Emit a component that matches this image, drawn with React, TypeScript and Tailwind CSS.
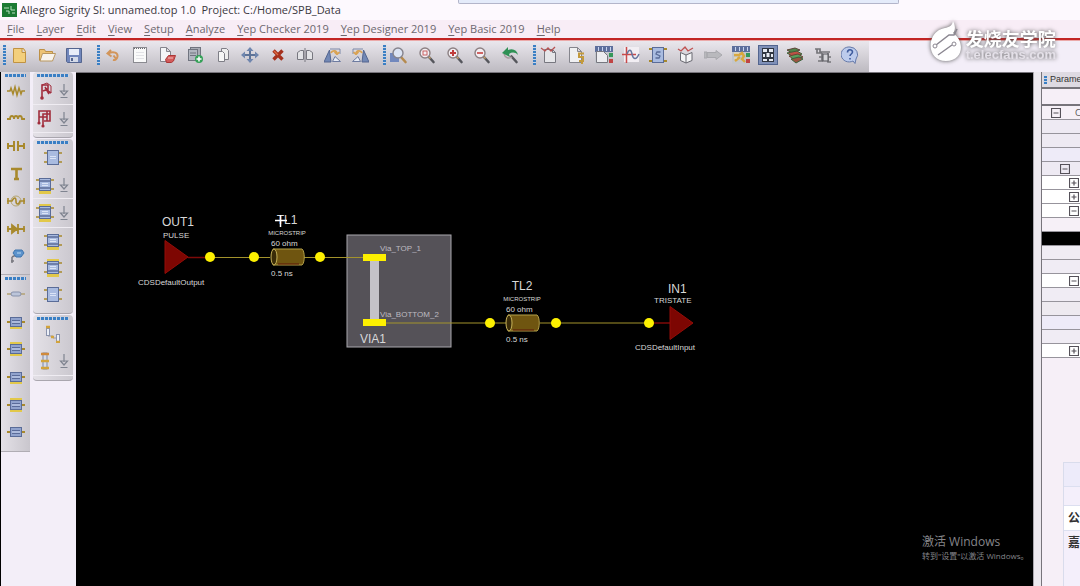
import type { ReactNode } from "react";

const GOLD = "#a8892c";
const CHIP = "#a9bbe0";
const CHIP_EDGE = "#5a6c98";

function Icon({ children }: { children: ReactNode }) {
  return (
    <svg viewBox="0 0 18 18" className="size-[18px]" fill="none" aria-hidden="true">
      {children}
    </svg>
  );
}

function Page() {
  return <path d="M2.5 1.500h8l4 4v11h-12z M10.5 1.500v4h4" fill="#f0f0f2" stroke="#85858d" />;
}

function Lens({ children }: { children?: ReactNode }) {
  return (
    <>
      <path d="M10.5 10.5l5 5.5" stroke="#55565c" strokeWidth="2.6" strokeLinecap="round" />
      <path d="M10.5 10.5l2 2" stroke="#c9a067" strokeWidth="1.6" />
      <circle cx="7" cy="7" r="5" fill="#f3eef2" stroke="#8c8083" strokeWidth="1.4" />
      {children}
    </>
  );
}

function Board() {
  return (
    <>
      <rect x="0" y="0" width="18" height="18" fill="#c3c6cc" />
      <rect x="0" y="0" width="18" height="6" fill="#5d6f9c" />
      <path d="M3.500 1v4M7.500 1v4M11.500 1v4M15.500 1v4" stroke="#c7d4f0" />
      <rect x="14" y="7" width="4" height="4" fill="#35985a" />
      <rect x="14" y="13" width="4" height="4" fill="#c04444" />
    </>
  );
}

type Tool = { label: string; icon: ReactNode; on?: boolean };

const FILE_TOOLS: Tool[] = [
  {
    label: "New",
    icon: <path d="M3.5 2.5h10l2 3v11h-12z M12 2.5v4h3.5" fill="#f3cf7c" stroke="#c09343" />,
  },
  {
    label: "Open",
    icon: (
      <>
        <path d="M1.5 14.5v-11h5l1 2h7v3" fill="#edc374" stroke="#bd9046" />
        <path d="M4.5 7.5h13l-3 7.5h-12.500z" fill="#f7f3ec" stroke="#b9975f" />
      </>
    ),
  },
  {
    label: "Save",
    icon: (
      <>
        <path d="M1.500 2.500h15v14h-14l-1-1z" fill="#7186bb" stroke="#54658f" />
        <rect x="4" y="3" width="10" height="6" fill="#e8edf8" />
        <rect x="5" y="11" width="8" height="5" fill="#d4dae8" />
        <rect x="6" y="12" width="2" height="3" fill="#54658f" />
      </>
    ),
  },
];

const EDIT_TOOLS: Tool[] = [
  {
    label: "Undo",
    icon: (
      <path
        d="M7 4L3.500 7.500l4 3M4 7.500c6-3 10-.5 9.500 3-.5 2.500-2.500 4-4.500 3.500M9.500 9.500l3 4"
        stroke="#d2955a"
        strokeWidth="2"
      />
    ),
  },
  {
    label: "Notes",
    icon: (
      <>
        <rect x="2.500" y="1.500" width="13" height="15" fill="#fafafa" stroke="#8a8a90" />
        <path d="M3 2.500h12" stroke="#6a6a70" strokeDasharray="1 1" />
        <path d="M5 6.500h8M5 9.500h8M5 12.500h8" stroke="#e2e2e6" />
      </>
    ),
  },
  {
    label: "Delete page",
    icon: (
      <>
        <path d="M1.500 1.500h6l4 4v10h-10z M7.500 1.500v4h4" fill="#f4f4f6" stroke="#85858d" />
        <path d="M6.500 13.500l3-4h7l-2 5.500-2 1.500h-5z" fill="#d35a5a" stroke="#ab3636" />
        <path d="M9 12h5" stroke="#f1bcbc" />
      </>
    ),
  },
  {
    label: "Add copy",
    icon: (
      <>
        <rect x="4.500" y="1.500" width="10" height="11" fill="#a8abb4" stroke="#70747f" />
        <rect x="2.500" y="3.500" width="9" height="11" fill="#b2b6c0" stroke="#70747f" />
        <path d="M4 7h6M4 9.500h6" stroke="#70747f" />
        <circle cx="13" cy="13" r="4" fill="#35a158" />
        <path d="M13 10.500v5M10.500 13h5" stroke="#fff" strokeWidth="1.500" />
      </>
    ),
  },
  {
    label: "Copy",
    icon: (
      <>
        <path d="M7.500 2.500h5l2 2v9h-7z" fill="#eee" stroke="#7e7e86" />
        <path d="M4.500 5.500h4l2 2v8h-6z" fill="#f6f6f6" stroke="#7e7e86" />
      </>
    ),
  },
  {
    label: "Move",
    icon: (
      <>
        <path d="M9 3v12M3 9h12" stroke="#5d7398" strokeWidth="2" />
        <path d="M9 1l3.500 4h-7zM9 17l3.500-4h-7zM0 9l4-3.500v7zM18 9l-4-3.500v7z" fill="#6f86ae" />
      </>
    ),
  },
  {
    label: "Delete",
    icon: (
      <>
        <path d="M4.500 4.500l9 9M13.500 4.500l-9 9" stroke="#a5301c" strokeWidth="3.400" />
        <path d="M5 5l4 4" stroke="#e06c42" strokeWidth="1.200" />
      </>
    ),
  },
  {
    label: "Mirror",
    icon: (
      <>
        <path d="M7.500 4.500h-3l-3 2v7h6zM10.500 4.500h3l3 2v7h-6z" fill="#e3e3e6" stroke="#77777f" />
        <path d="M9 2v14" stroke="#77777f" />
      </>
    ),
  },
  {
    label: "Rotate left",
    icon: (
      <>
        <path d="M0 16L5.500 4 7 16z" fill="#7288b5" stroke="#54658f" />
        <path d="M8.500 15.500h8l-5.500-5z" fill="#e7ebf4" stroke="#6d7ba0" />
        <path d="M6 3h10v5" stroke="#7c89a9" />
        <path d="M7 7c1-3 6-3 6 1M13 8.500L10.500 6M13 8.500L15.500 6" stroke="#d9a354" strokeWidth="1.700" />
      </>
    ),
  },
  {
    label: "Rotate right",
    icon: (
      <>
        <path d="M18 16L12.500 4 11 16z" fill="#7288b5" stroke="#54658f" />
        <path d="M9.500 15.500h-8l5.500-5z" fill="#e7ebf4" stroke="#6d7ba0" />
        <path d="M12 3H2v5" stroke="#7c89a9" />
        <path d="M11 7c-1-3-6-3-6 1M5 8.500L7.500 6M5 8.500L2.500 6" stroke="#d9a354" strokeWidth="1.700" />
      </>
    ),
  },
];

const ZOOM_TOOLS: Tool[] = [
  {
    label: "Zoom by points",
    icon: (
      <>
        <rect x="0" y="7" width="9" height="9" fill="#7288bd" />
        <path d="M10.500 10.500l5 5.500" stroke="#b58a4e" strokeWidth="2.600" strokeLinecap="round" />
        <circle cx="8" cy="7" r="5" fill="#dbe3f3" stroke="#85838c" strokeWidth="1.400" />
      </>
    ),
  },
  {
    label: "Zoom fit",
    icon: (
      <Lens>
        <rect x="5" y="5" width="4" height="4" stroke="#c96060" />
      </Lens>
    ),
  },
  {
    label: "Zoom in",
    icon: (
      <Lens>
        <path d="M7 4v6M4 7h6" stroke="#bf3c3c" strokeWidth="2" />
      </Lens>
    ),
  },
  {
    label: "Zoom out",
    icon: (
      <Lens>
        <path d="M4 7h6" stroke="#cf6464" strokeWidth="2" />
      </Lens>
    ),
  },
  {
    label: "Zoom previous",
    icon: (
      <>
        <path d="M10.500 10.500l5 5.500" stroke="#55565c" strokeWidth="2.600" strokeLinecap="round" />
        <path d="M3 8c1 4 5 5 8 3" stroke="#a79a9d" strokeWidth="1.400" />
        <path d="M1 7l6-6v3c5-2 9 0 10 5-3-3-6-3-9-1l1 3z" fill="#2f9155" />
      </>
    ),
  },
];

const ANALYSIS_TOOLS: Tool[] = [
  {
    label: "Waveform report",
    icon: (
      <>
        <path d="M4.500 3.500h8l3 3v10h-11z M12.500 3.500v3h3" fill="#e6e6e9" stroke="#77777f" />
        <path d="M1 2l4 3 3-3 3 3 4-4" stroke="#b75252" strokeWidth="1.300" />
      </>
    ),
  },
  {
    label: "Sweep report",
    icon: (
      <>
        <Page />
        <path d="M17 7.500h-5v3.500h4v4h-4M15 15v3" stroke="#c39a3c" strokeWidth="2" />
      </>
    ),
  },
  {
    label: "Board setup",
    icon: (
      <>
        <Board />
        <path d="M1.500 5.500h7l4 4v7h-11z" fill="#ececef" stroke="#77777f" />
      </>
    ),
  },
  {
    label: "Simulate",
    icon: (
      <>
        <rect x="2" y="1" width="15" height="15" fill="#f2eef3" />
        <path d="M4.500 1v16M0 8.500h14" stroke="#c94a4a" strokeWidth="1.500" />
        <path d="M5 8c2-5 4-5 5 0s4 7 7 0" stroke="#68779e" strokeWidth="1.500" />
      </>
    ),
  },
  {
    label: "Device model",
    icon: (
      <>
        <path d="M0 3h18M0 15h18" stroke={GOLD} strokeWidth="2" />
        <rect x="3.500" y="1.500" width="11" height="15" fill={CHIP} stroke={CHIP_EDGE} />
        <path d="M11.500 6H8L7 8l4 2-1 2H6.500" stroke={CHIP_EDGE} strokeWidth="1.300" />
      </>
    ),
  },
  {
    label: "Wave library",
    icon: (
      <>
        <path d="M9 9L3.500 6.500v8L9 17l6-2.500v-8zM9 9v8" fill="#f4f4f6" stroke="#686870" />
        <path d="M1 3l3 2 4-4 3 4 5-3" stroke="#c05252" strokeWidth="1.300" />
      </>
    ),
  },
  {
    label: "Connector",
    icon: <path d="M0 6h3v6H0zM3 6.500h9V4.500l6 4.500-6 4.500v-2H3z" fill="#b9b9bd" stroke="#a8a8ad" />,
  },
  {
    label: "Board edit",
    icon: (
      <>
        <Board />
        <path d="M2 9h5l3-2 2 3-2 3 3 3M3 15l5-4" stroke="#d9a83e" strokeWidth="2.400" />
        <path d="M2 7h5M2 12h3" stroke="#f5e2b0" />
      </>
    ),
  },
  {
    label: "Constraint manager",
    on: true,
    icon: (
      <>
        <rect x="3" y="2" width="12" height="14" fill="#303642" />
        <path d="M4 3h4v3H4zM10 3h4v3h-4zM4 8h2v3H4zM7.500 7h3v4h-3zM12 8h2v3h-2zM4 13h4v2H4zM10 13h4v2h-4z" fill="#e6eaf3" />
      </>
    ),
  },
  {
    label: "Stackup",
    icon: (
      <>
        <path d="M1 4l8-2 5 2-8 3z" fill="#52864d" stroke="#5e4336" />
        <path d="M1 7l10-2 5 3-8 3z" fill="#bf5145" stroke="#39623a" />
        <path d="M3 10l9-2 5 3-8 3z" fill="#58a05d" stroke="#6c4034" />
        <path d="M5 13l8-2 4 2-7 4z" fill="#9c5240" stroke="#39623a" />
      </>
    ),
  },
  {
    label: "Via wizard",
    icon: (
      <>
        <path d="M1 3h5v3h10M3 3v4h5M8 7v8M5 11h12M14 7v9h3M4 15h5" stroke="#75757a" strokeWidth="1.700" />
        <rect x="9" y="8" width="5" height="7" fill="#d4d4d8" stroke="#55555b" />
      </>
    ),
  },
  {
    label: "Help",
    icon: (
      <>
        <path d="M9 1a8 7.500 0 1 0 3 14l2 2.500 1-4.500A8 7.500 0 0 0 9 1z" fill="#bccbec" stroke="#6478a8" />
        <path d="M6.500 6.500c0-3.500 5-3.500 5-.5 0 2-2.500 2-2.500 4M9 12v1.500" stroke="#3e5b9d" strokeWidth="1.600" />
      </>
    ),
  },
];

function ToolButton({ label, icon, on }: Tool) {
  return (
    <button
      type="button"
      aria-label={label}
      className={on ? "size-[18px] bg-[#7f90b8] outline-1 outline-[#53658f]" : "size-[18px]"}
    >
      <Icon>{icon}</Icon>
    </button>
  );
}

function ToolGroup({ tools, width }: { tools: Tool[]; width: string }) {
  return (
    <div className="flex items-center gap-1">
      <span className="h-5 w-[3px] bg-[repeating-linear-gradient(#3a7fc4_0_2px,#c9d3e4_2px_3px)]" />
      <div className={`flex justify-between ${width}`}>
        {tools.map((tool) => (
          <ToolButton key={tool.label} {...tool} />
        ))}
      </div>
    </div>
  );
}

function Chip({ top, bottom }: { top?: boolean; bottom?: boolean }) {
  const banded = top || bottom;
  return (
    <>
      {top && <rect x="3" y="0" width="12" height="4" fill="#e2c84a" />}
      {bottom && <rect x="3" y="14" width="12" height="4" fill="#e2c84a" />}
      <path d="M0 4h18M0 13h18" stroke={GOLD} strokeWidth="1.600" />
      <rect
        x="3.500"
        y={banded ? 2.5 : 1.5}
        width="11"
        height={banded ? 12 : 14}
        fill={CHIP}
        stroke={CHIP_EDGE}
      />
      {banded && <path d="M4 5h10M4 12h10" stroke="#6f80ab" strokeWidth="2" />}
      <path d="M6 7.500h6M6 9.500h6" stroke="#dbe4f6" />
    </>
  );
}

function Coupled({ top, bottom }: { top?: boolean; bottom?: boolean }) {
  return (
    <>
      {top && <rect x="3" y="2" width="12" height="4" fill="#e2c84a" />}
      {bottom && <rect x="3" y="13" width="12" height="3" fill="#e2c84a" />}
      <path d="M0 9h18" stroke={GOLD} strokeWidth="2" />
      <rect x="3.500" y="4.500" width="11" height="9" fill="#91a3cd" stroke={CHIP_EDGE} />
      <path d="M5 7.500h8M5 10.500h8" stroke="#5b6c99" />
      <path d="M5 9h8" stroke="#c8d3ec" />
    </>
  );
}

const DISCRETE_PARTS: Tool[] = [
  { label: "Resistor", icon: <path d="M0 9h3l1-3 2 6 2-7 2 8 2-7 2 6 1-3h3" stroke={GOLD} strokeWidth="1.500" /> },
  {
    label: "Inductor",
    icon: <path d="M0 10h3c0-4 4-4 4 0 0-4 4-4 4 0 0-4 4-4 4 0h3" stroke={GOLD} strokeWidth="1.800" />,
  },
  {
    label: "Capacitor",
    icon: <path d="M0 9h7M11 9h7M1 6v6M7 4v10M11 4v10M17 6v6" stroke={GOLD} strokeWidth="2" />,
  },
  {
    label: "Terminator",
    icon: <path d="M4 4h11M9.500 4v11M7 14h5" stroke={GOLD} strokeWidth="2.600" />,
  },
  {
    label: "Source",
    icon: (
      <>
        <circle cx="9" cy="9" r="5" stroke="#b5a671" />
        <path d="M0 9h5c2-4 4-4 4 0s3 4 4 0h5M1 6v6M17 6v6" stroke={GOLD} strokeWidth="1.600" />
      </>
    ),
  },
  {
    label: "Diode",
    icon: <path d="M0 9h18M1 6v6M5 5v8l5-4zM11 4v10M17 6v6" fill={GOLD} stroke={GOLD} strokeWidth="1.800" />,
  },
  {
    label: "Probe",
    icon: (
      <>
        <path d="M5 16v-6M4 14h3M5 10l4-2" stroke="#77777f" strokeWidth="1.500" />
        <path d="M8 3h7l2 3-3 4H9L6 6z" fill="#5b92cc" stroke="#3f75ad" />
        <path d="M10 6h4" stroke="#bcdaf3" />
      </>
    ),
  },
];

const LINE_PARTS: Tool[] = [
  {
    label: "Ideal line",
    icon: (
      <>
        <path d="M0 9h18" stroke="#b3a273" strokeWidth="1.500" />
        <rect x="4" y="7" width="10" height="4" rx="2" fill="#bcc5da" stroke="#8791ab" />
      </>
    ),
  },
  { label: "Microstrip", icon: <Coupled bottom /> },
  { label: "Stripline", icon: <Coupled top bottom /> },
  { label: "Coupled microstrip", icon: <Coupled bottom /> },
  { label: "Coupled stripline", icon: <Coupled top bottom /> },
  { label: "Coupled line", icon: <Coupled /> },
];

type Part = Tool & { menu?: boolean };

const TRACE_PARTS: Part[] = [
  {
    label: "Trace",
    menu: true,
    icon: (
      <>
        <path d="M6 16V3h6v4L7 9M12 3v6l3 2M9 5l4 7" stroke="#a12d3c" strokeWidth="1.600" />
        <circle cx="6" cy="16" r="1.800" fill="#a12d3c" />
        <path d="M6 3l5-2 4 3v7" stroke="#a12d3c" />
      </>
    ),
  },
  {
    label: "Trace pair",
    menu: true,
    icon: (
      <>
        <path d="M3 14V1h11v10H8M7 16V4h7M3 7h8v4M11 1v6" stroke="#a12d3c" strokeWidth="1.600" />
        <circle cx="3" cy="13" r="1.600" fill="#a12d3c" />
        <circle cx="7" cy="16" r="1.600" fill="#a12d3c" />
      </>
    ),
  },
];

const CHIP_PARTS: Part[] = [
  { label: "Generic device", icon: <Chip /> },
  { label: "Device bottom", menu: true, icon: <Chip bottom /> },
  { label: "Device top", menu: true, icon: <Chip top bottom /> },
  { label: "Package bottom", icon: <Chip bottom /> },
  { label: "Package top", icon: <Chip top bottom /> },
  { label: "Package", icon: <Chip /> },
];

const VIA_PARTS: Part[] = [
  {
    label: "Wire bond",
    icon: (
      <>
        <path d="M4 3v8h5v2h5v3" stroke="#9a9aa4" />
        <rect x="2.500" y="3.500" width="3" height="7" fill="#eceff7" stroke="#8a93ad" />
        <rect x="12.500" y="9.500" width="3" height="7" fill="#eceff7" stroke="#8a93ad" />
        <path d="M2 2h4M7 12h3M12 17h4" stroke="#d2a33c" strokeWidth="2.500" />
      </>
    ),
  },
  {
    label: "Via",
    menu: true,
    icon: (
      <>
        <rect x="7" y="1" width="4" height="16" fill="#d5dbea" stroke="#7c88a6" />
        <path d="M5 2h8" stroke="#d08a3c" strokeWidth="2.500" />
        <path d="M5 9h8M5 16h8" stroke="#d2a33c" strokeWidth="2.500" />
      </>
    ),
  },
];

function DotHandle() {
  return (
    <div className="px-1">
      <div className="h-[3px] bg-[repeating-linear-gradient(90deg,#3a7fc4_0_3px,#c9d3e4_3px_4px)]" />
    </div>
  );
}

function PartColumn({ parts, height }: { parts: Tool[]; height: string }) {
  return (
    <div className="pt-[2px]">
      <DotHandle />
      <div className={`flex flex-col ${height}`}>
        {parts.map((part) => (
          <div key={part.label} className="flex flex-1 items-center justify-center">
            <ToolButton {...part} />
          </div>
        ))}
      </div>
    </div>
  );
}

function PartPanel({ parts, height }: { parts: Part[]; height: string }) {
  return (
    <section className="rounded-sm border-b border-[#a9a6ae] bg-linear-to-r from-[#e4e1e7] to-[#cbc8cf] pt-[2px] pb-1">
      <DotHandle />
      <div className={`flex flex-col ${height}`}>
        {parts.map((part) => (
          <div
            key={part.label}
            className={
              part.menu
                ? "flex flex-1 items-center gap-1 border-b border-[#efecf2] pl-[3px]"
                : "flex flex-1 items-center justify-center"
            }
          >
            <ToolButton label={part.label} icon={part.icon} />
            {part.menu && (
              <button type="button" aria-label={`${part.label} options`} className="h-4 w-3">
                <svg viewBox="0 0 12 16" className="h-4 w-3" fill="none" aria-hidden="true">
                  <path d="M6 1v8M2.500 8L6 12l3.500-4zM2.500 14.500h7" stroke="#7f8490" strokeWidth="1.200" />
                </svg>
              </button>
            )}
          </div>
        ))}
      </div>
    </section>
  );
}

const MENUS = [
  "File",
  "Layer",
  "Edit",
  "View",
  "Setup",
  "Analyze",
  "Yep Checker 2019",
  "Yep Designer 2019",
  "Yep Basic 2019",
  "Help",
];

function TransmissionLine({ x, y, name }: { x: number; y: number; name: string }) {
  return (
    <g transform={`translate(${x} ${y})`}>
      <path d="M-14-8h29c3 2 3 14 0 16h-29z" fill="#6f5510" stroke="#b3a048" />
      <ellipse cx="-13" cy="0" rx="3" ry="8" fill="#3a2c08" stroke="#c9b45a" />
      <path d="M-9 7h21" stroke="#5c1408" />
      <g fill="#d8d8d8">
        <text y="-33" fontSize="12" textAnchor="middle">{name}</text>
        <text y="-22" fontSize="6" textAnchor="middle">MICROSTRIP</text>
        <text x="-16" y="-11" fontSize="8">60 ohm</text>
        <text x="-16" y="19" fontSize="8">0.5 ns</text>
      </g>
    </g>
  );
}

function Node({ x, y }: { x: number; y: number }) {
  return <circle cx={x} cy={y} r="5" fill="#fdf000" />;
}

function Schematic() {
  return (
    <svg
      width="957"
      height="513"
      viewBox="76 73 957 513"
      className="block font-['Liberation_Sans',sans-serif]"
      role="img"
      aria-label="Topology: OUT1, TL1, VIA1, TL2, IN1"
    >
      <rect x="347" y="235" width="104" height="112" fill="#555258" stroke="#aaa8ae" />
      <path d="M210 257.500h60M304 257.500h60M386 323h120M540 323h109" stroke="#a3932c" strokeWidth="1.200" />
      <path d="M188 257.500h22M649 323h21" stroke="#7d0a08" strokeWidth="1.500" />
      <path d="M165 240.500l23 16.500-23 16.500zM670 306.500l23 16.500-23 16.500z" fill="#7d0602" stroke="#940d08" />

      <rect x="370" y="259" width="9" height="62" fill="#c4c2c8" />
      <rect x="363" y="254" width="23" height="7" fill="#fdf000" />
      <rect x="363" y="319" width="23" height="7" fill="#fdf000" />

      <TransmissionLine x={287} y={257} name="TL1" />
      <TransmissionLine x={522} y={323} name="TL2" />

      <Node x={210} y={257} />
      <Node x={254} y={257} />
      <Node x={320} y={257} />
      <Node x={490} y={323} />
      <Node x={556} y={323} />
      <Node x={649} y={323} />

      <g fill="#d8d8d8">
        <text x="162" y="226" fontSize="12">OUT1</text>
        <text x="163" y="238" fontSize="8">PULSE</text>
        <text x="138" y="285" fontSize="8">CDSDefaultOutput</text>
        <text x="668" y="293" fontSize="12">IN1</text>
        <text x="654" y="303" fontSize="8">TRISTATE</text>
        <text x="635" y="350" fontSize="8">CDSDefaultInput</text>
        <text x="360" y="343" fontSize="12">VIA1</text>
      </g>
      <g fill="#bdbbc1" fontSize="8">
        <text x="380" y="251">Via_TOP_1</text>
        <text x="380" y="317">Via_BOTTOM_2</text>
      </g>

      {/* crosshair cursor */}
      <path d="M280.500 215v12M275 220.500h12" stroke="#fff" strokeWidth="1.500" />
    </svg>
  );
}

type Row = { mark?: "plus" | "minus"; pad?: string; text?: string; tone: string };

const ROWS: Row[] = [
  { mark: "minus", pad: "pl-[9px]", text: "C", tone: "bg-[#f6f0f7]" },
  { tone: "bg-[#eeeaf3]" },
  { tone: "bg-[#eeeaf3]" },
  { tone: "bg-[#eeebf8]" },
  { mark: "minus", pad: "pl-[18px]", tone: "bg-[#eeeaf3]" },
  { mark: "plus", pad: "pl-[27px]", tone: "bg-white" },
  { mark: "plus", pad: "pl-[27px]", tone: "bg-white" },
  { mark: "minus", pad: "pl-[27px]", tone: "bg-white" },
  { tone: "bg-[#f6f0f7]" },
  { tone: "bg-black" },
  { tone: "bg-[#f0ecf4]" },
  { tone: "bg-[#f0ecf4]" },
  { mark: "minus", pad: "pl-[27px]", tone: "bg-white" },
  { tone: "bg-[#f0ecf4]" },
  { tone: "bg-[#eeeaf0]" },
  { tone: "bg-[#eeebf8]" },
  { tone: "bg-[#f0ecf4]" },
  { mark: "plus", pad: "pl-[27px]", tone: "bg-white" },
];

function Parameters() {
  return (
    <aside className="flex w-[39px] shrink-0 flex-col overflow-hidden border-l border-[#77747b] bg-[#f6eff7]">
      <h2 className="flex h-[15px] shrink-0 items-center gap-[3px] bg-[#dedae2] pl-[2px] font-['Liberation_Sans',sans-serif] text-[9px] text-[#333]">
        <span className="h-2 w-[3px] shrink-0 bg-[repeating-linear-gradient(#3a7fc4_0_2px,#c9d3e4_2px_3px)]" />
        Parameters
      </h2>
      <table className="w-full border-collapse text-[9px]">
        <thead>
          <tr className="h-[17px] border-t-2 border-b-2 border-[#77747b]">
            <th className="p-0" />
          </tr>
        </thead>
        <tbody>
          {ROWS.map((row, i) => (
            <tr key={i} className={`h-[14px] border-b border-[#97949c] ${row.tone}`}>
              <td className={`p-0 ${row.pad ?? ""}`}>
                <span className="flex h-[13px] items-center gap-[14px] text-[#555]">
                  {row.mark && (
                    <svg viewBox="0 0 10 10" className="size-[10px] shrink-0" fill="none">
                      <path
                        d={row.mark === "plus" ? "M.5.5h9v9h-9zM2.500 5h5M5 2.500v5" : "M.5.5h9v9h-9zM2.500 5h5"}
                        stroke="#555159"
                        strokeWidth="1.200"
                      />
                    </svg>
                  )}
                  {row.text}
                </span>
              </td>
            </tr>
          ))}
        </tbody>
      </table>
      <div className="mt-auto ml-[21px] border-t border-l border-[#d9dcec] bg-[#f4effb] text-[12px] font-bold text-[#333]">
        <div className="h-6 border-b border-[#dcdff0] bg-[#edebfa]" />
        <div className="h-[18px]" />
        <div className="h-[26px] overflow-hidden border-y border-[#dcdff0] bg-white pl-1 leading-6">公</div>
        <div className="h-[55px] overflow-hidden pl-1 leading-6 whitespace-nowrap">嘉立</div>
      </div>
    </aside>
  );
}

function Watermark() {
  return (
    <div className="absolute top-5 right-6 flex items-start gap-[2px] drop-shadow-[0_0_2px_#555]">
      <svg viewBox="0 0 36 42" className="h-[42px] w-9" aria-hidden="true">
        <path d="M25 1c3 6 2 10 0 12 12 8 11 28-7 28S-2 18 11 10C18 7 24 8 25 1z" fill="#fff" />
        <path d="M8 25l13-10h5l3-6M10 35l14-10" stroke="#8b8791" strokeWidth="1.500" fill="none" />
        <circle cx="7" cy="26" r="2" fill="#fff" stroke="#8b8791" />
        <circle cx="26" cy="24" r="2" fill="#fff" stroke="#8b8791" />
      </svg>
      <div className="pt-2 text-white">
        <p className="font-['Noto_Sans_CJK_SC',sans-serif] text-[18px] leading-5 font-bold">发烧友学院</p>
        <p className="font-['Liberation_Sans',sans-serif] text-[13px] leading-[14px] font-bold text-[#e4e0e8]">
          t.elecfans.com
        </p>
      </div>
    </div>
  );
}

export default function App() {
  return (
    <div className="relative flex h-screen flex-col overflow-hidden bg-[#f3eef8] font-['Open_Sans','Noto_Sans_CJK_SC',sans-serif]">
      <header className="bg-[#fdf9fe]">
        <div className="flex h-5 items-center gap-[3px] pl-[2px]">
          <svg viewBox="0 0 15 14" className="h-[14px] w-[15px]" fill="none" aria-hidden="true">
            <rect width="15" height="14" fill="#1c7a34" />
            <path d="M2 5h5M4 8h3v3M9 3v4h4M10 10h3" stroke="#b9e0c0" />
          </svg>
          <h1 className="text-[11px] whitespace-pre text-[#3b383e]">
            {"Allegro Sigrity SI: unnamed.top 1.0  Project: C:/Home/SPB_Data"}
          </h1>
        </div>
        <nav className="flex h-[18px] items-center gap-3 bg-[#f8edf6] pl-[7px] text-[11px] text-[#6d686f]">
          {MENUS.map((menu) => (
            <button key={menu} type="button">
              <span className="underline underline-offset-2">{menu[0]}</span>
              {menu.slice(1)}
            </button>
          ))}
        </nav>
      </header>
      <div className="absolute top-0 left-[458px] h-1 w-[441px] rounded-b-xs border border-t-0 border-[#b3b5ca] bg-[#e4ebfa]" />

      <div className="h-[3px] shrink-0 border-b border-[#eba9a9] bg-[#c22424]" />

      <div className="flex h-[31px] shrink-0 items-center">
        <div className="flex h-full items-start gap-[14px] bg-linear-to-b from-[#eae7ed] to-[#bdbac1] pt-1 pr-[10px] pl-[3px]">
          <ToolGroup tools={FILE_TOOLS} width="w-[73px]" />
          <ToolGroup tools={EDIT_TOOLS} width="w-[265px]" />
          <ToolGroup tools={ZOOM_TOOLS} width="w-[129px]" />
          <ToolGroup tools={ANALYSIS_TOOLS} width="w-[319px]" />
        </div>
      </div>

      <div className="flex min-h-0 flex-1">
        <div className="flex w-[76px] shrink-0 items-start gap-[3px] border-l border-black">
          <div className="w-[29px] border-b border-[#b0adb4] bg-linear-to-r from-[#e4e1e7] to-[#c9c6cd] pb-[5px]">
            <PartColumn parts={DISCRETE_PARTS} height="h-[193px]" />
            <div className="mt-1 border-t border-[#b0adb4]">
              <PartColumn parts={LINE_PARTS} height="h-[166px]" />
            </div>
          </div>
          <div className="flex w-10 flex-col gap-px">
            <PartPanel parts={TRACE_PARTS} height="h-[56px]" />
            <PartPanel parts={CHIP_PARTS} height="h-[165px]" />
            <PartPanel parts={VIA_PARTS} height="h-[56px]" />
          </div>
        </div>

        <main className="relative min-w-0 flex-1 overflow-hidden border-t border-[#77747b] bg-black">
          <Schematic />
          <div className="absolute right-0 bottom-6 w-[111px] text-[#85858a]">
            <p className="text-[12px] leading-4">激活 Windows</p>
            <p className="text-[8px] leading-3 whitespace-nowrap">转到"设置"以激活 Windows。</p>
          </div>
        </main>

        <div className="w-2 shrink-0 border-l border-[#aaa7ae] bg-[#ece8ee]" />
        <Parameters />
      </div>

      <Watermark />
    </div>
  );
}
